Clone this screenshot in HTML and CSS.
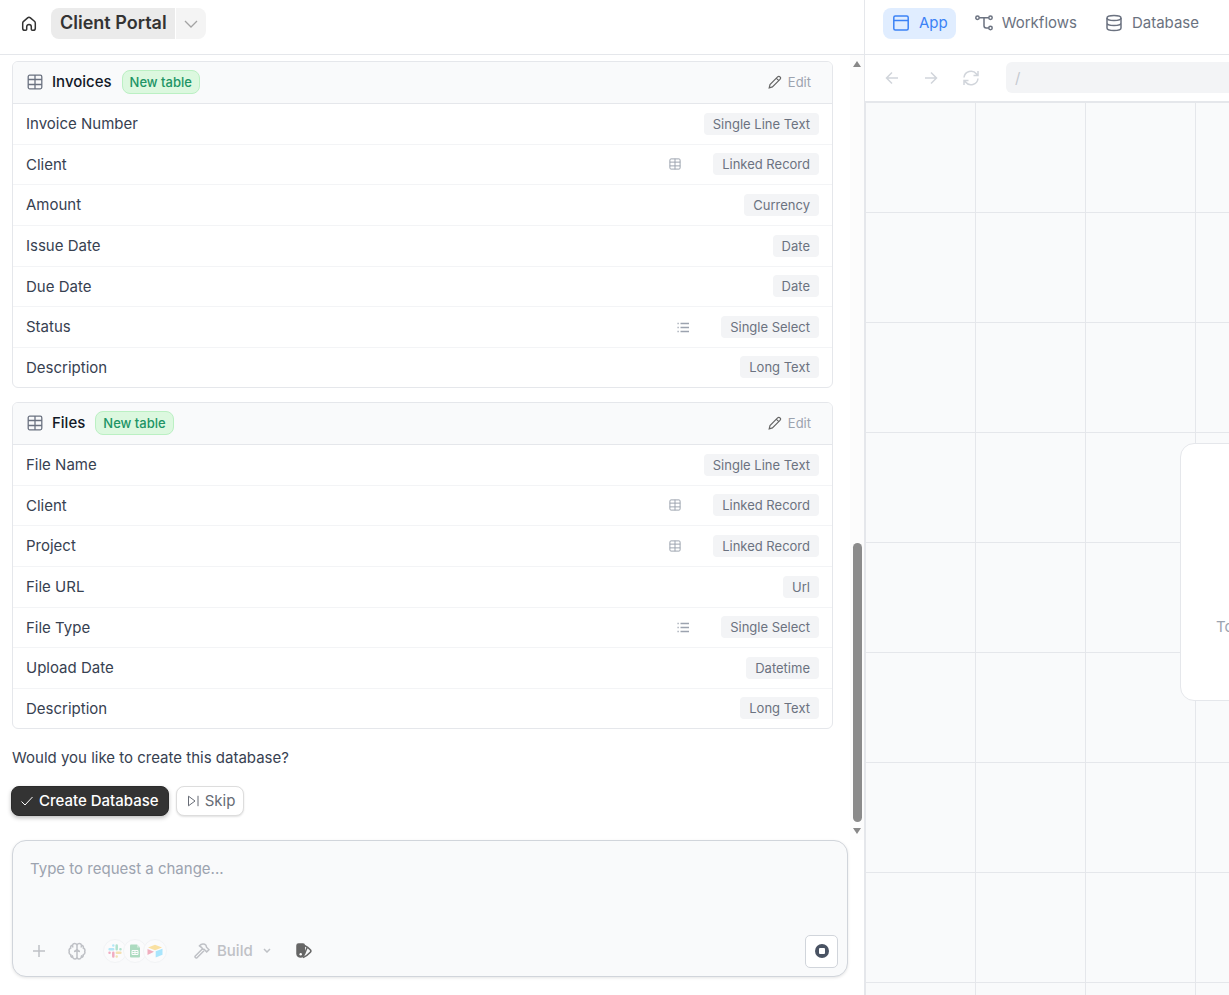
FILE: index.html
```html
<!DOCTYPE html>
<html lang="en">
<head>
<meta charset="utf-8">
<title>Client Portal</title>
<link rel="stylesheet" href="styles.css">
</head>
<body>
<svg class="sprite" aria-hidden="true">
  <symbol id="i-table" viewBox="0 0 16 16"><rect x="1.200" y="1.200" width="13.600" height="13.600" rx="1.500"/><path d="M1 5.500h14M1 10.500h14M8 1v14"/></symbol>
  <symbol id="i-list" viewBox="0 0 12 12"><path d="M3.500 2.500h8.500M3.500 6.500h8.500M3.500 10.500h8.500M.5 2.500h1.200M.5 6.500h1.200M.5 10.500h1.200"/></symbol>
  <symbol id="i-pencil" viewBox="0 0 14 14"><path d="M1.200 12.800l.8-3.300 7.600-7.600c.7-.7 1.700-.7 2.400 0s.7 1.700 0 2.400L4.400 11.900zM8.300 3.200l2.400 2.400"/></symbol>
</svg>
<div class="app">
  <main class="builder">
    <header class="topbar">
      <button class="icon-btn home" aria-label="Home"><svg width="16" height="16" viewBox="0 0 16 16"><path d="M1.700 7.200c0-.8.3-1.400.9-1.900l4-3.400c.8-.7 2-.7 2.800 0l4 3.400c.6.500.9 1.100.9 1.900v5c0 1.200-.9 2.100-2.100 2.100h-.9c-.6 0-1-.4-1-1V10.700a2.300 2.300 0 0 0-4.600 0v2.600c0 .6-.4 1-1 1h-.9c-1.200 0-2.100-.9-2.100-2.100z"/></svg></button>
      <div class="title-group">
        <button class="title">Client Portal</button>
        <button class="title-more" aria-label="Project menu"><svg width="14" height="8" viewBox="0 0 14 8"><path d="M1 1l6 6 6-6"/></svg></button>
      </div>
    </header>
    <div class="scroller">
      <div class="messages">
        <section class="card">
          <div class="card-head">
            <svg class="head-icon"><use href="#i-table"/></svg><h2>Invoices</h2><span class="badge">New table</span>
            <button class="edit"><svg width="14" height="14"><use href="#i-pencil"/></svg>Edit</button>
          </div>
          <table class="fields">
            <tr><th scope="row">Invoice Number</th><td><span class="type">Single Line Text</span></td></tr>
            <tr><th scope="row">Client</th><td><svg class="hint"><use href="#i-table"/></svg><span class="type">Linked Record</span></td></tr>
            <tr><th scope="row">Amount</th><td><span class="type">Currency</span></td></tr>
            <tr><th scope="row">Issue Date</th><td><span class="type">Date</span></td></tr>
            <tr><th scope="row">Due Date</th><td><span class="type">Date</span></td></tr>
            <tr><th scope="row">Status</th><td><svg class="hint"><use href="#i-list"/></svg><span class="type">Single Select</span></td></tr>
            <tr><th scope="row">Description</th><td><span class="type">Long Text</span></td></tr>
          </table>
        </section>
        <section class="card">
          <div class="card-head">
            <svg class="head-icon"><use href="#i-table"/></svg><h2>Files</h2><span class="badge">New table</span>
            <button class="edit"><svg width="14" height="14"><use href="#i-pencil"/></svg>Edit</button>
          </div>
          <table class="fields">
            <tr><th scope="row">File Name</th><td><span class="type">Single Line Text</span></td></tr>
            <tr><th scope="row">Client</th><td><svg class="hint"><use href="#i-table"/></svg><span class="type">Linked Record</span></td></tr>
            <tr><th scope="row">Project</th><td><svg class="hint"><use href="#i-table"/></svg><span class="type">Linked Record</span></td></tr>
            <tr><th scope="row">File URL</th><td><span class="type">Url</span></td></tr>
            <tr><th scope="row">File Type</th><td><svg class="hint"><use href="#i-list"/></svg><span class="type">Single Select</span></td></tr>
            <tr><th scope="row">Upload Date</th><td><span class="type">Datetime</span></td></tr>
            <tr><th scope="row">Description</th><td><span class="type">Long Text</span></td></tr>
          </table>
        </section>
        <p class="question">Would you like to create this database?</p>
        <div class="actions">
          <button class="btn primary"><svg width="14" height="12" viewBox="0 0 14 12"><path d="M1.500 6.500l3.500 3.500L12.500 2"/></svg>Create Database</button>
          <button class="btn"><svg width="14" height="12" viewBox="0 0 14 12"><path d="M2.500 1.200v9.600L9 6zM12 .8v10.400"/></svg>Skip</button>
        </div>
      </div>
      <div class="scrollbar" aria-hidden="true">
        <svg width="10" height="8" viewBox="0 0 10 8"><path d="M5 1L9 7H1z"/></svg>
        <div class="track"><div class="thumb"></div></div>
        <svg width="10" height="8" viewBox="0 0 10 8"><path d="M5 7L1 1h8z"/></svg>
      </div>
    </div>
    <form class="composer">
      <textarea aria-label="Request a change" placeholder="Type to request a change..."></textarea>
      <div class="tools">
        <button type="button" class="tool add" aria-label="Add"><svg width="14" height="14" viewBox="0 0 14 14"><path d="M7 1v12M1 7h12"/></svg></button>
        <button type="button" class="tool brain" aria-label="Knowledge"><svg width="18" height="18" viewBox="0 0 18 18"><path d="M9 3.500a2.300 2.300 0 0 0-4.500-.2C3 3.400 2.300 4.700 2.700 6 1.300 6.600.8 8 1.300 9.300c-.5 1.500.1 2.800 1.400 3.300-.1 1.600.8 2.800 2.200 2.900C5.700 17.700 9 17.400 9 15zM9 3.500a2.300 2.300 0 0 1 4.500-.2c1.500.1 2.200 1.400 1.800 2.700 1.400.6 1.900 2 1.400 3.300.5 1.500-.1 2.800-1.400 3.300.1 1.600-.8 2.800-2.200 2.900C12.300 17.700 9 17.400 9 15M6 9.500q2.500-.2 3-2.500.5 2.300 3 2.500M4.500 3.300l.3 2.200M13.500 3.300l-.3 2.200M4.900 15.500l-.7-2.200M13.100 15.500l.7-2.200"/></svg></button>
        <button type="button" class="apps" aria-label="Integrations">
          <span class="app-icon"><svg width="14" height="14" viewBox="0 0 14 14"><g stroke-width="2.500" stroke-linecap="round"><path stroke="#36c5f0" d="M5.300 1.500v.1M1.600 5.200h3.600"/><path stroke="#2eb67d" d="M8.700 1.600v3.600M12.400 5.200h.1"/><path stroke="#e01e5a" d="M1.500 8.700h.1M5.300 8.800v3.600"/><path stroke="#ecb22e" d="M8.800 8.700h3.600M8.700 12.400v.1"/></g></svg></span>
          <span class="app-icon"><svg width="14" height="14" viewBox="0 0 14 14"><path fill="#23a455" d="M3 .5h6l3 3v9q0 1-1 1H3q-1 0-1-1v-11q0-1 1-1z"/><path fill="#8ed1a5" d="M9 .5l3 3H9z"/><path stroke="#fff" d="M4 6.500h6v4H4zM4 8.500h6M7 6.500v4"/></svg></span>
          <span class="app-icon"><svg width="16" height="14" viewBox="0 0 16 14"><path fill="#fcb400" d="M1 3.500L8 .7l7 2.800-7 2.800z"/><path fill="#18bfff" d="M8.700 7.300L15.500 4.700v6.100l-6.800 2.700z"/><path fill="#dd244e" d="M.5 5L7 7.800.5 11z"/></svg></span>
        </button>
        <button type="button" class="tool build"><svg width="16" height="16" viewBox="0 0 16 16"><path d="M8.300 6L1.300 13c-.9 1 .7 2.700 1.700 1.700l7-7M5.500 2.800C7.500.6 10.300.6 12 2.300l.5 1.900 2.500 2.500-2.300 2.200L10 6.200H8.800L7.700 4.600z"/></svg>Build<svg width="8" height="5" viewBox="0 0 8 5"><path d="M1 1l3 3 3-3"/></svg></button>
        <button type="button" class="tool theme" aria-label="Theme"><svg width="16" height="16" viewBox="0 0 16 16"><path class="solid" d="M2.500 1H7q1.300 0 1.300 1.300V11a3.700 3.700 0 0 1-7.300 0V2.500Q1 1 2.500 1z"/><path d="M8.500 2.500Q12 4 14.500 7q.9 1.200-.2 2.300Q11.500 12.500 7 14.700M8.500 11l2.700-6.800"/><circle cx="4.700" cy="11.300" r="1.200" fill="#fff" stroke="none"/></svg></button>
        <button type="button" class="stop" aria-label="Stop"><svg width="14" height="14" viewBox="0 0 14 14"><circle cx="7" cy="7" r="7" fill="#4a5363"/><rect x="4" y="4" width="6" height="6" rx="1" fill="#fff"/></svg></button>
      </div>
    </form>
  </main>
  <section class="preview">
    <nav class="tabs">
      <button class="tab active"><svg width="18" height="18" viewBox="0 0 18 18"><rect x="1.800" y="2" width="14.400" height="14" rx="1.500"/><path d="M2 6.500h14"/></svg>App</button>
      <button class="tab"><svg width="18" height="18" viewBox="0 0 18 18"><circle cx="2.500" cy="3.800" r="1.700"/><circle cx="15.500" cy="3.800" r="1.700"/><circle cx="15.500" cy="14" r="1.700"/><path d="M4.200 3.800h9.600M9 3.800v8q0 2.200 2.200 2.200h2.600"/></svg>Workflows</button>
      <button class="tab"><svg width="18" height="18" viewBox="0 0 18 18"><ellipse cx="9" cy="4" rx="7" ry="2.500"/><path d="M2 4v10c0 1.400 3.100 2.500 7 2.500s7-1.100 7-2.500V4M2 9c0 1.400 3.100 2.500 7 2.500s7-1.100 7-2.500"/></svg>Database</button>
    </nav>
    <div class="browser">
      <button class="nav" aria-label="Back"><svg width="14" height="14" viewBox="0 0 14 14"><path d="M13 7H1.500M7 1.500L1.500 7 7 12.500"/></svg></button>
      <button class="nav" aria-label="Forward"><svg width="14" height="14" viewBox="0 0 14 14"><path d="M1 7h11.500M7 1.500L12.500 7 7 12.500"/></svg></button>
      <button class="nav" aria-label="Reload"><svg width="16" height="16" viewBox="0 0 16 16"><path d="M1 7.500A7 7 0 0 1 13.500 4L15 5.500M15 1v4.500h-4.500M15 8.500A7 7 0 0 1 2.500 12L1 10.500M1 15v-4.500h4.500"/></svg></button>
      <input class="address" type="text" aria-label="Page path" placeholder="/">
    </div>
    <div class="canvas"><div class="notice"><p>To start building, describe your app</p></div></div>
  </section>
</div>
</body>
</html>
```
FILE: styles.css
```css
* { box-sizing: border-box; }
body { margin: 0; font-family: Inter, "Liberation Sans", sans-serif; font-size: 15px; line-height: 20px; color: #374151; background: #fff; }
button { font: inherit; color: inherit; border: 0; padding: 0; background: none; display: flex; align-items: center; }
svg { fill: none; stroke: currentColor; flex: none; }
h2, p { margin: 0; }
.sprite { display: none; }
.app { display: grid; grid-template-columns: minmax(0, 864fr) minmax(0, 365fr); height: 100vh; overflow: hidden; }
.builder { display: flex; flex-direction: column; min-height: 0; }

.topbar { display: flex; align-items: flex-start; gap: 14px; padding: 8px 21px 15px; border-bottom: 1px solid #e5e7eb; }
.home { height: 31px; color: #333; }
.home svg { stroke-width: 1.500; }
.title-group { display: flex; gap: 1px; }
.title { height: 31px; padding: 0 8px 2px 9px; background: #ebebeb; border-radius: 8px 0 0 8px; font-size: 18px; font-weight: 600; color: #333; }
.title-more { width: 30px; justify-content: center; background: #f4f4f4; border-radius: 0 8px 8px 0; color: #a3a3a3; }
.title-more svg { stroke-width: 1.300; }

.scroller { flex: 1; min-height: 0; display: flex; }
.messages { flex: 1; min-width: 0; padding: 6px 17px 0 12px; overflow: hidden; }
.card { margin-bottom: 14px; border: 1px solid #e5e7eb; border-radius: 6px; overflow: hidden; }
.card-head { display: flex; align-items: center; height: 42px; padding: 0 21px 1px 14px; background: #f9fafb; border-bottom: 1px solid #e5e7eb; }
.head-icon { width: 16px; height: 16px; color: #6b7280; stroke-width: 1.300; }
.card-head h2 { margin: 0 10px 0 9px; font-size: 15px; font-weight: 500; color: #111827; }
.badge { padding: 1px 7px; border: 1px solid #bbf0c3; border-radius: 8px; background: #dcf8df; color: #209465; font-size: 13px; font-weight: 500; }
.edit { margin-left: auto; gap: 6px; color: #9ca3af; font-size: 13px; }
.edit svg { color: #666; stroke-width: 1.200; }
.fields { width: 100%; border-spacing: 0; }
.fields th, .fields td { height: 41px; padding: 0 13px; border-bottom: 1px solid #f3f4f6; font-weight: 400; text-align: left; }
.fields td { text-align: right; padding-bottom: 1px; }
.fields tr:nth-child(3n + 2) > * { height: 40px; }
.fields tr:last-child > * { height: 39px; border-bottom: 0; }
.type { display: inline-block; padding: 1px 9px; border-radius: 4px; background: #f3f4f6; color: #6b7280; font-size: 13px; vertical-align: middle; }
.hint { width: 12px; height: 12px; margin-right: 32px; color: #9ca3af; stroke-width: 1.300; vertical-align: middle; }
.question { margin-top: 19px; }
.actions { display: flex; gap: 7px; margin: 18px 0 0 -1px; }
.btn { height: 30px; padding: 0 8px 0 9px; gap: 5px; border: 1px solid #ddd; border-radius: 8px; background: #fff; color: #666b75; box-shadow: 0 1px 2px #0000001f; }
.primary { padding: 0 9px 0 8px; background: #333; border-color: #2b2b2b; color: #fff; font-weight: 500; box-shadow: 0 2px 4px #00000040; }
.scrollbar { width: 14px; padding: 5px 0 5px 2px; display: flex; flex-direction: column; background: #fcfcfc; color: #888; }
.scrollbar svg { fill: currentColor; stroke: none; }
.track { flex: 1; display: flex; flex-direction: column; justify-content: flex-end; padding-bottom: 5px; }
.thumb { width: 9px; margin-left: 1px; height: 37%; border-radius: 5px; background: #8b8b8b; }

.composer { margin: 0 16px 18px 12px; padding: 18px 9px 8px 17px; border: 1px solid #d1d5db; border-radius: 14px; background: #f9fafb; box-shadow: 0 1px 3px #0000001a; }
textarea { display: block; width: 100%; height: 76px; padding: 0; border: 0; outline: 0; resize: none; background: none; font: inherit; color: #374151; }
textarea::placeholder { color: #9ca3af; opacity: 1; }
.tools { display: flex; align-items: center; color: #bfc1c6; }
.tool, .apps { padding-bottom: 2px; }
.tool svg { stroke-width: 1.500; }
.add { margin-left: 2px; }
.brain { margin-left: 22px; }
.apps { margin-left: 17px; opacity: .35; }
.app-icon { display: flex; align-items: center; justify-content: center; width: 24px; height: 24px; border: 1px solid #e5e7eb; border-radius: 50%; background: #fff; }
.app-icon + .app-icon { margin-left: -4px; }
.app-icon svg { stroke: none; }
.build { margin-left: 27px; gap: 7px; font-weight: 500; }
.build svg + svg { margin-left: 3px; }
.theme { margin-left: 25px; color: #666; }
.theme .solid { fill: currentColor; }
.stop { width: 33px; height: 33px; margin-left: auto; padding-bottom: 2px; justify-content: center; border: 1px solid #d1d5db; border-radius: 5px; background: #fff; }
.stop svg { stroke: none; }

.preview { display: flex; flex-direction: column; min-width: 0; border-left: 1px solid #e5e7eb; }
.tabs { display: flex; gap: 10px; padding: 8px 18px 15px; border-bottom: 1px solid #e5e7eb; }
.tab { height: 31px; padding: 0 9px 1px; gap: 9px; border-radius: 8px; color: #6b7280; }
.tab svg { stroke-width: 1.500; }
.active { padding-right: 8px; background: #e0edff; color: #3b82f6; }
.browser { display: flex; align-items: center; gap: 25px; padding: 7px 0 8px 20px; border-bottom: 2px solid #e5e7eb; }
.nav { color: #d1d5db; }
.nav svg { stroke-width: 1.500; }
.address { flex: 1; min-width: 0; height: 31px; margin-left: 2px; padding: 0 9px; border: 0; border-radius: 6px 0 0 6px; background: #f3f4f6; font: inherit; color: #374151; }
.address::placeholder { color: #c5c9d0; opacity: 1; }
.canvas { flex: 1; display: flex; align-items: center; overflow: hidden; padding: 46px 0 0 314px; border-left: 1px solid #e5e7eb; background: linear-gradient(#e5e7eb 1px, transparent 1px) -1px 109px / 110px 110px, linear-gradient(90deg, #e5e7eb 1px, transparent 1px) 109px 0 / 110px 110px, #f9fafb; }
.notice { flex: none; width: 440px; height: 258px; padding: 173px 35px 0; border: 1px solid #e5e7eb; border-radius: 14px; background: #fff; color: #9ca3af; white-space: nowrap; }
```
